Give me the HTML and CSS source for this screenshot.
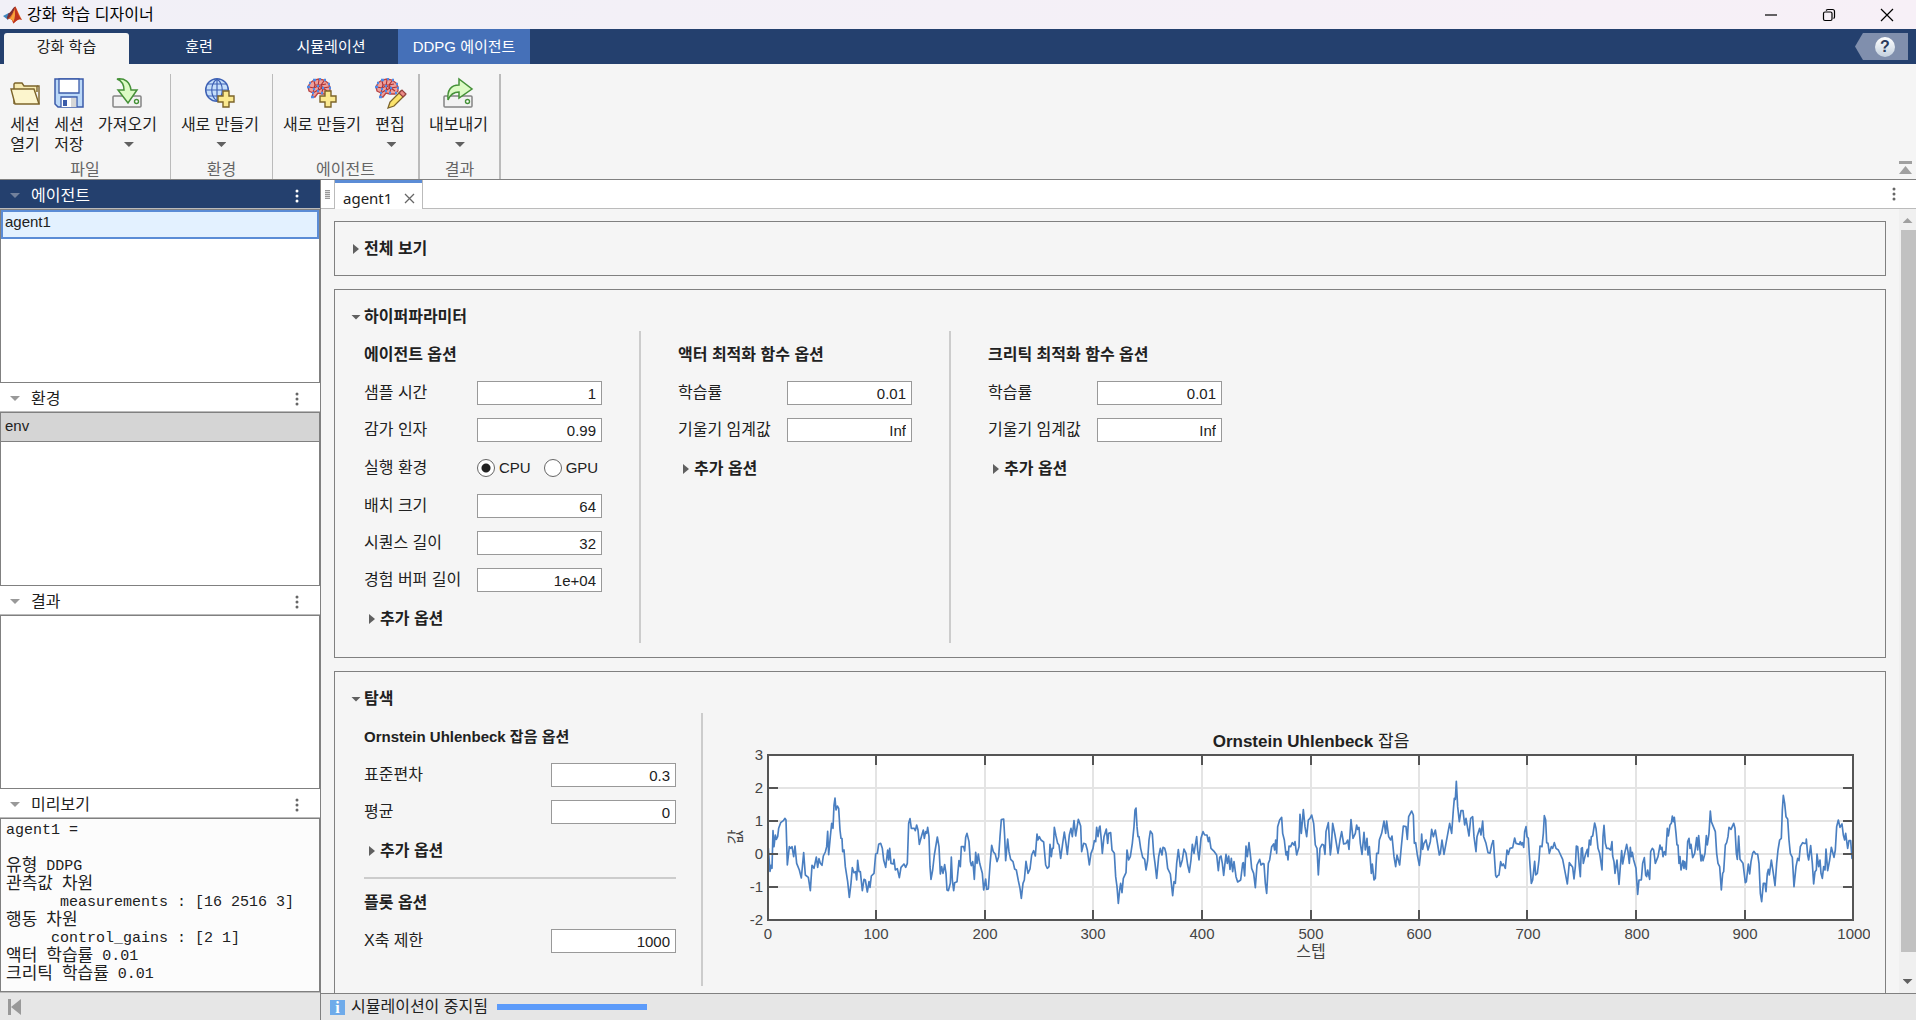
FILE: index.html
```html
<!DOCTYPE html>
<html lang="ko">
  <head>
    <meta charset="utf-8">
    <title>강화 학습 디자이너</title>
    <link rel="stylesheet" href="styles.css">
  </head>

  <body>
    <svg width="0" height="0" class="symbols" aria-hidden="true">
      <symbol id="plus" viewBox="0 0 18 18">
        <path d="M6 1h6v5h5v6h-5v5H6v-5H1V6h5z" fill="#fbe98f" stroke="#7c642a" stroke-width="1.4"/>
      </symbol>
      <symbol id="drive" viewBox="0 0 30 13">
        <rect x="1" y="1" width="28" height="11" rx="1" fill="#f2f2f2" stroke="#848484" stroke-width="1.5"/>
        <circle cx="24.500" cy="6.500" r="2" fill="#fff" stroke="#459138" stroke-width="1.4"/>
      </symbol>
      <symbol id="brain" viewBox="0 0 24 21">
        <path d="M5 19l1-4-4-2-1-4 2-4 4-3 5-1 5 1 4 3 2 4v4l-3 3h-5l-4-1-3 4z" fill="#f0a09a" stroke="#b84546" stroke-width="1.3"/>
        <path d="M2 9l5 1 4-2 5 2 6-1M7 10l-1 5 5-3 5-2-1 4M7 3l1 4-1 3M12 2l-1 6 1 5M17 3l-3 4 2 3 4 3M8 7h6l5-1" fill="none" stroke="#a93036" stroke-width="1.1"/>
        <path d="M4 19h3M0 9h3M2 5h2M6 2h3M12 1h2M17 2h2M21 6h2M22 10h2M20 15h2M14 15h2M10 8h2M6 11h2M15 10h2M10 13h2M5 15h2" stroke="#4f8be8" stroke-width="2.4"/>
      </symbol>
      <symbol id="dots" viewBox="0 0 4 14">
        <circle cx="2" cy="2" r="1.500"/><circle cx="2" cy="7" r="1.500"/><circle cx="2" cy="12" r="1.500"/>
      </symbol>
    </svg>

    <div class="app">
      <header class="titlebar">
        <svg class="logo" viewBox="0 0 20 18">
          <path d="M0 10l6-3 3 2-4 5z" fill="#3f86bd"/>
          <path d="M6 7c3-1 4-6 7-7-1 6-4 11-8 14l-1-2z" fill="#7b3036"/>
          <path d="M5 13c4-2 6-8 8-13 2 3 4 9 7 14-4-2-6 1-9 4-1-4-3-5-6-5z" fill="#e8641f"/>
          <path d="M12 2c1 5 0 10-2 14l1 2c3-3 5-6 9-4-4-4-5-9-7-14z" fill="#bd3420"/>
          <path d="M12 3c-1 5-3 8-5 10 2 0 3 1 4 3 2-4 2-9 1-13z" fill="#f6a33d"/>
        </svg>
        <span class="app-name">강화 학습 디자이너</span>
        <div class="window-buttons">
          <button type="button" aria-label="최소화"><svg viewBox="0 0 14 14"><path d="M1 7h12"/></svg></button>
          <button type="button" aria-label="이전 크기로"><svg viewBox="0 0 14 14"><rect x="1.500" y="4" width="8.500" height="8.500" rx="1.500"/><path d="M4 2.500Q5 1.500 6 1.500h4.500q2 0 2 2V9q0 1-1 1.500"/></svg></button>
          <button type="button" aria-label="닫기"><svg viewBox="0 0 14 14"><path d="M1 1l12 12M13 1L1 13"/></svg></button>
        </div>
      </header>

      <nav class="tabs">
        <button type="button" class="tab tab-active">강화 학습</button>
        <button type="button" class="tab">훈련</button>
        <button type="button" class="tab">시뮬레이션</button>
        <button type="button" class="tab tab-context">DDPG 에이전트</button>
        <button type="button" class="help" aria-label="도움말"><span class="help-mark">?</span></button>
      </nav>

      <div class="toolstrip">
        <section class="group">
          <div class="tools tools-file">
            <button type="button" class="tool">
              <svg viewBox="0 0 30 30"><path d="M4 26V6l1-1h7l2 3h13v6" fill="#f6eab0" stroke="#7c642a" stroke-width="1.4"/><path d="M1 11h23l5 15H5z" fill="#fcf5cd" stroke="#7c642a" stroke-width="1.4"/><path d="M27 8h2v18" fill="none" stroke="#7c642a" stroke-width="1.400"/></svg>
              <span>세션<br>열기</span>
            </button>
            <button type="button" class="tool">
              <svg viewBox="0 0 30 30"><path d="M1 1h28v28H4l-3-3z" fill="#bcd9f8" stroke="#3b5ba9" stroke-width="1.500"/><path d="M5 1h20v14H5zM7 29V19h16v10" fill="#fff" stroke="#3b5ba9" stroke-width="1.300"/><path d="M17 20h5v9h-5z" fill="#d7d7d7"/><path d="M9 22h4v6H9z" fill="#3b5ba9"/></svg>
              <span>세션<br>저장</span>
            </button>
            <button type="button" class="tool">
              <svg viewBox="0 0 30 30"><use href="#drive" y="17" width="30" height="13"/><path d="M5 1c8-1 13 3 14 11h6l-9 13-10-13h6c0-5-2-9-7-11z" fill="#dcfbc5" stroke="#459138" stroke-width="1.500"/></svg>
              <span>가져오기</span>
              <i class="arrow-down"></i>
            </button>
          </div>
          <div class="group-name">파일</div>
        </section>
        <section class="group">
          <div class="tools tools-env">
            <button type="button" class="tool">
              <svg viewBox="0 0 30 30"><circle cx="12" cy="12" r="11.300" fill="#c6dffa" stroke="#3f62b5" stroke-width="1.500"/><path d="M12 1v22M1 12h22M3 6h18M3 18h18M12 1c-7 5-7 17 0 22M12 1c7 5 7 17 0 22" fill="none" stroke="#3f62b5" stroke-width="1.200"/><use href="#plus" x="12" y="12" width="18" height="18"/></svg>
              <span>새로 만들기</span>
              <i class="arrow-down"></i>
            </button>
          </div>
          <div class="group-name">환경</div>
        </section>
        <section class="group group-wide">
          <div class="tools tools-agent">
            <button type="button" class="tool">
              <svg viewBox="0 0 30 30"><use href="#brain" width="24" height="21"/><use href="#plus" x="12" y="12" width="18" height="18"/></svg>
              <span>새로 만들기</span>
            </button>
            <button type="button" class="tool">
              <svg viewBox="0 0 30 30"><use href="#brain" width="24" height="21"/><path d="M13 30l2-6 11-11 4 4-11 11z" fill="#fbe36b" stroke="#7c642a" stroke-width="1.300"/><path d="M24 15l3-3 4 4-3 3z" fill="#ed8b87" stroke="#93423f" stroke-width="1.200"/></svg>
              <span>편집</span>
              <i class="arrow-down"></i>
            </button>
          </div>
          <div class="group-name">에이전트</div>
        </section>
        <section class="group group-wide">
          <div class="tools tools-result">
            <button type="button" class="tool">
              <svg viewBox="0 0 30 30"><use href="#drive" y="17" width="30" height="13"/><path d="M5 22C4 12 8 7 16 7V1l13 10-13 9v-6C10 14 7 17 5 22z" fill="#dcfbc5" stroke="#459138" stroke-width="1.500"/></svg>
              <span>내보내기</span>
              <i class="arrow-down"></i>
            </button>
          </div>
          <div class="group-name">결과</div>
        </section>
        <button type="button" class="collapse" aria-label="도구 스트립 최소화">
          <svg viewBox="0 0 13 14"><path d="M0 0h13v3H0zM6.500 5L13 13H0z"/></svg>
        </button>
      </div>

      <div class="workspace">
        <aside class="sidebar">
          <section class="browser browser-active">
            <h2><i class="arrow-down"></i>에이전트<button type="button" class="menu" aria-label="에이전트 메뉴"><svg><use href="#dots"/></svg></button></h2>
            <div class="list"><button type="button" class="item item-selected">agent1</button></div>
          </section>
          <section class="browser">
            <h2><i class="arrow-down"></i>환경<button type="button" class="menu" aria-label="환경 메뉴"><svg><use href="#dots"/></svg></button></h2>
            <div class="list"><button type="button" class="item item-inactive">env</button></div>
          </section>
          <section class="browser">
            <h2><i class="arrow-down"></i>결과<button type="button" class="menu" aria-label="결과 메뉴"><svg><use href="#dots"/></svg></button></h2>
            <div class="list"></div>
          </section>
          <section class="browser">
            <h2><i class="arrow-down"></i>미리보기<button type="button" class="menu" aria-label="미리보기 메뉴"><svg><use href="#dots"/></svg></button></h2>
            <pre class="list preview">agent1 =

<b>유형</b> DDPG
<b>관측값</b> <b>차원</b>
      measurements : [16 2516 3]
<b>행동</b> <b>차원</b>
     control_gains : [2 1]
<b>액터</b> <b>학습률</b> 0.01
<b>크리틱</b> <b>학습률</b> 0.01</pre>
          </section>
          <footer class="sidebar-footer">
            <button type="button" aria-label="패널 접기"><svg viewBox="0 0 13 16"><path d="M0 0h3v16H0zM13 0v16L3 8z"/></svg></button>
          </footer>
        </aside>

        <main class="document">
          <div class="doc-tabs">
            <span class="grip"></span>
            <div class="doc-tab">agent1<button type="button" aria-label="agent1 닫기"><svg viewBox="0 0 11 11"><path d="M1 1l9 9M10 1l-9 9"/></svg></button></div>
            <button type="button" class="menu" aria-label="문서 메뉴"><svg><use href="#dots"/></svg></button>
          </div>

          <div class="doc-body">
            <div class="panels">
              <section class="panel">
                <button type="button" class="toggle"><i class="arrow-right"></i>전체 보기</button>
              </section>

              <section class="panel">
                <button type="button" class="toggle"><i class="arrow-down"></i>하이퍼파라미터</button>
                <div class="columns">
                  <div class="column">
                    <h3>에이전트 옵션</h3>
                    <div class="form">
                      <label for="sampleTime">샘플 시간</label>
                      <input type="text" id="sampleTime" value="1">
                      <label for="discount">감가 인자</label>
                      <input type="text" id="discount" value="0.99">
                      <span>실행 환경</span>
                      <div class="radios">
                        <label><input type="radio" name="device" checked>CPU</label>
                        <label><input type="radio" name="device">GPU</label>
                      </div>
                      <label for="batchSize">배치 크기</label>
                      <input type="text" id="batchSize" value="64">
                      <label for="sequence">시퀀스 길이</label>
                      <input type="text" id="sequence" value="32">
                      <label for="buffer">경험 버퍼 길이</label>
                      <input type="text" id="buffer" value="1e+04">
                      <button type="button" class="toggle more"><i class="arrow-right"></i>추가 옵션</button>
                    </div>
                  </div>
                  <div class="column">
                    <h3>액터 최적화 함수 옵션</h3>
                    <div class="form form-optimizer">
                      <label for="actorRate">학습률</label>
                      <input type="text" id="actorRate" value="0.01">
                      <label for="actorGradient">기울기 임계값</label>
                      <input type="text" id="actorGradient" value="Inf">
                      <button type="button" class="toggle more"><i class="arrow-right"></i>추가 옵션</button>
                    </div>
                  </div>
                  <div class="column">
                    <h3>크리틱 최적화 함수 옵션</h3>
                    <div class="form form-optimizer">
                      <label for="criticRate">학습률</label>
                      <input type="text" id="criticRate" value="0.01">
                      <label for="criticGradient">기울기 임계값</label>
                      <input type="text" id="criticGradient" value="Inf">
                      <button type="button" class="toggle more"><i class="arrow-right"></i>추가 옵션</button>
                    </div>
                  </div>
                </div>
              </section>

              <section class="panel">
                <button type="button" class="toggle"><i class="arrow-down"></i>탐색</button>
                <div class="columns">
                  <div class="column column-noise">
                    <h3 class="latin">Ornstein Uhlenbeck 잡음 옵션</h3>
                    <div class="form form-noise">
                      <label for="deviation">표준편차</label>
                      <input type="text" id="deviation" value="0.3">
                      <label for="mean">평균</label>
                      <input type="text" id="mean" value="0">
                      <button type="button" class="toggle more"><i class="arrow-right"></i>추가 옵션</button>
                    </div>
                    <hr>
                    <h3>플롯 옵션</h3>
                    <div class="form form-noise">
                      <label for="xLimit">X축 제한</label>
                      <input type="text" id="xLimit" value="1000">
                    </div>
                  </div>
                  <div class="plot">
                    <svg viewBox="0 0 1154 240" role="img" aria-label="Ornstein Uhlenbeck 잡음">
                      <rect x="52" y="29" width="1085" height="165" fill="#fff"/>
                      <path class="grid-line" d="M160 29v165M269 29v165M377 29v165M486 29v165M595 29v165M703 29v165M811 29v165M920 29v165M1029 29v165M52 62h1085M52 95h1085M52 128h1085M52 161h1085"/>
                      <g class="noise">
                        <polyline transform="translate(44 -6) scale(.33333)" points="23,385 25,385 30,454 33,436 36,445 39,332 42,380 46,345 49,358 53,350 56,325 62,308 70,302 75,295 78,300 82,435 88,380 92,385 96,380 101,410 105,378 110,430 118,450 124,474 131,398 136,465 145,472 151,512 156,436 162,445 169,411 173,442 177,416 181,430 186,436 190,408 196,396 200,380 203,334 206,404 211,350 215,310 219,325 222,255 225,234 228,270 232,258 236,265 240,330 243,355 246,356 248,395 252,390 256,440 263,485 268,532 273,490 277,443 282,458 287,455 290,480 293,421 297,455 301,455 307,512 312,478 316,480 322,516 327,485 330,502 334,468 342,460 347,402 352,400 356,373 362,370 367,385 371,420 377,442 383,390 386,420 389,385 393,430 400,432 402,418 406,450 412,446 418,473 423,442 432,432 437,442 442,430 446,310 450,296 454,325 463,325 466,332 470,315 474,330 478,373 484,350 490,330 493,355 497,335 500,340 503,322 507,350 510,440 513,478 518,450 523,405 532,351 537,380 541,462 545,440 549,460 554,434 558,460 561,510 565,512 571,490 574,411 577,480 581,512 584,488 591,485 597,422 601,440 604,380 611,380 614,393 617,352 621,340 627,365 631,425 634,437 638,425 640,440 643,478 647,397 651,430 655,402 659,430 667,460 671,510 677,477 680,508 685,507 690,435 695,376 700,395 706,403 711,425 716,410 720,350 724,299 731,297 734,350 737,422 743,357 747,395 752,418 759,425 764,447 769,450 775,482 780,505 784,535 789,490 793,480 798,424 804,460 810,447 815,405 821,392 826,408 831,342 834,360 838,350 843,360 851,366 857,435 862,445 867,440 870,373 874,410 877,385 880,385 883,322 888,348 893,370 897,375 902,415 908,370 913,336 918,370 922,403 928,345 933,325 937,350 942,302 947,348 955,298 962,318 965,395 971,370 977,372 982,390 988,435 993,400 999,385 1003,362 1007,365 1010,322 1014,350 1018,322 1020,318 1024,360 1027,400 1032,350 1039,327 1043,370 1046,340 1052,338 1056,390 1063,400 1067,470 1071,500 1075,550 1079,510 1082,490 1086,518 1090,475 1098,458 1101,390 1106,420 1111,410 1117,370 1122,320 1125,270 1128,264 1131,320"/>
                        <polyline transform="translate(404 -6) scale(.33333)" points="51,320 54,350 57,350 62,385 68,412 74,418 78,450 83,420 87,360 91,333 97,342 101,400 105,430 110,475 116,410 121,385 126,405 129,382 134,385 138,400 143,445 151,462 158,527 162,485 166,490 170,430 175,389 181,440 187,420 192,387 198,400 203,435 208,457 213,420 217,373 222,400 230,350 233,390 237,420 243,355 249,335 254,345 261,345 265,365 268,352 273,385 283,395 290,405 295,452 299,412 303,408 307,430 311,466 318,403 322,430 326,408 330,448 334,415 338,455 342,425 348,470 353,486 362,480 368,430 370,428 374,468 378,378 382,410 387,368 392,412 395,445 401,460 406,503 411,435 419,418 423,435 429,430 432,432 436,490 440,520 445,430 449,420 455,380 461,372 464,390 467,360 470,400 473,320 479,300 485,292 488,340 493,360 498,405 501,395 504,420 507,378 512,380 517,368 522,375 525,365 530,405 537,380 540,283 544,340 550,269 555,320 560,350 565,300 570,295 575,285 581,310 586,375 591,385 595,465 600,385 606,373 611,375 615,403 618,335 625,308 631,405 634,380 638,310 645,345 654,400 660,360 665,335 671,372 678,370 683,360 687,388 693,299 699,355 706,340 710,315 713,328 717,322 721,370 726,403 732,337 736,390 741,355 744,405 748,380 754,460 757,432 762,480 766,475 770,400 775,400 778,360 785,340 792,303 797,340 800,303 806,350 812,360 816,348 822,410 827,440 831,405 839,435 844,380 850,318 858,320 862,358 866,290 875,273 880,285 883,370 887,368 892,405 898,436 902,400 905,342 908,388 912,370 918,360 924,390 931,365 935,328 940,350 946,330 952,368 958,405 961,400 966,360 972,403 979,365 989,310 995,340 1000,270 1003,235 1006,238 1009,184 1013,260 1018,305 1023,272 1029,272 1034,315 1038,295 1047,348 1052,295 1058,290 1062,350 1068,395 1071,350 1079,325 1083,345 1088,303 1091,350 1098,370 1104,398 1110,400 1115,375 1120,360"/>
                        <polyline transform="translate(764 -6) scale(.33333)" points="40,360 44,420 47,467 50,472 53,467 57,465 62,425 66,437 70,432 76,445 81,390 85,403 90,385 98,383 104,354 108,370 118,373 121,365 124,375 127,368 131,382 134,335 138,320 141,350 145,355 149,420 154,490 158,480 164,424 167,465 172,460 177,420 180,378 186,380 190,340 193,287 197,300 200,368 204,370 208,400 214,380 218,385 223,368 228,385 235,390 248,418 256,460 262,492 268,428 278,442 282,477 286,440 289,378 293,380 298,440 301,470 304,385 307,383 310,430 316,405 322,388 324,410 328,360 332,375 334,350 338,348 344,309 348,325 354,385 359,400 366,450 369,350 372,316 376,370 380,385 386,385 392,390 396,365 398,408 402,425 405,460 411,420 417,493 421,440 425,392 428,432 434,400 440,373 444,395 448,430 451,382 454,410 457,397 461,420 468,445 473,523 477,480 484,480 488,430 493,413 497,465 500,470 503,450 509,478 512,395 517,385 521,390 526,430 534,410 540,375 543,388 546,382 549,410 553,395 557,405 562,325 565,348 570,315 574,310 577,288 580,305 583,292 588,340 591,375 594,375 597,430 600,410 603,450 609,422 612,445 614,425 619,448 623,365 627,355 630,385 633,373 638,413 644,400 650,353 653,390 656,347 659,380 663,423 666,405 669,422 675,400 679,347 682,375 687,340 691,273 694,305 700,320 706,335 710,400 714,430 719,440 724,510 728,460 731,455 736,375 740,368 744,350 747,322 753,328 761,310 765,325 769,400 772,418 776,348 780,418 789,430 796,488 799,485 805,432 809,462 813,425 818,400 822,394 827,402 833,402 837,430 841,520 845,545 850,490 855,490 858,515 862,460 865,448 868,465 874,420 880,460 885,497 890,430 894,390 899,360 904,355 907,270 910,226 914,250 918,290 923,297 927,360 931,400 937,412 942,500 948,440 953,415 957,422 961,380 968,368 972,370 978,370 979,357 983,405 986,420 992,377 997,430 1001,492 1005,455 1009,450 1011,402 1016,440 1020,420 1023,460 1027,475 1031,440 1035,450 1038,387 1043,452 1049,420 1054,382 1062,412 1066,390 1070,320 1075,300 1080,322 1086,312 1090,345 1094,360 1097,340 1103,385 1107,362 1112,362 1116,415 1120,395"/>
                      </g>
                      <rect class="axis" x="52" y="29" width="1085" height="165"/>
                      <path class="axis" d="M160 29v10m0 145v10M269 29v10m0 145v10M377 29v10m0 145v10M486 29v10m0 145v10M595 29v10m0 145v10M703 29v10m0 145v10M811 29v10m0 145v10M920 29v10m0 145v10M1029 29v10m0 145v10M52 62h10m1065 0h10M52 95h10m1065 0h10M52 128h10m1065 0h10M52 161h10m1065 0h10"/>
                      <text x="595" y="21" class="plot-title">Ornstein Uhlenbeck <tspan>잡음</tspan></text>
                      <g class="y-ticks">
                        <text x="47" y="34">3</text>
                        <text x="47" y="67">2</text>
                        <text x="47" y="100">1</text>
                        <text x="47" y="133">0</text>
                        <text x="47" y="166">-1</text>
                        <text x="47" y="199">-2</text>
                      </g>
                      <g class="x-ticks">
                        <text x="52" y="213">0</text>
                        <text x="160" y="213">100</text>
                        <text x="269" y="213">200</text>
                        <text x="377" y="213">300</text>
                        <text x="486" y="213">400</text>
                        <text x="595" y="213">500</text>
                        <text x="703" y="213">600</text>
                        <text x="812" y="213">700</text>
                        <text x="921" y="213">800</text>
                        <text x="1029" y="213">900</text>
                        <text x="1138" y="213">1000</text>
                      </g>
                      <text x="595" y="231" class="axis-label">스텝</text>
                      <text transform="translate(25 111) rotate(-90)" class="axis-label">값</text>
                    </svg>
                  </div>
                </div>
              </section>
            </div>
            <div class="scrollbar">
              <i class="arrow-up"></i>
              <div class="thumb"></div>
              <i class="arrow-down"></i>
            </div>
          </div>

          <footer class="status">
            <span class="info">i</span>
            <span>시뮬레이션이 중지됨</span>
            <span class="progress"></span>
          </footer>
        </main>
      </div>
    </div>
  </body>
</html>
```
FILE: styles.css
```css
* {
  box-sizing: border-box;
}

body {
  margin: 0;
  font-family: "Liberation Sans", "Noto Sans CJK KR", sans-serif;
  font-size: 16px;
  line-height: 24px;
  color: #212121;
  background-color: #f5f5f5;
}

button {
  margin: 0;
  padding: 0;
  border: none;
  background: none;
  font: inherit;
  color: inherit;
}

h2,
h3 {
  margin: 0;
  font-size: 16px;
}

.symbols {
  position: absolute;
}

.app {
  display: flex;
  flex-direction: column;
  height: 100vh;
  overflow: hidden;
}

/* Small triangles */

.arrow-down,
.arrow-up,
.arrow-right {
  width: 10px;
  height: 5px;
  background-color: #606060;
  clip-path: polygon(0 0, 100% 0, 50% 100%);
}

.arrow-up {
  clip-path: polygon(50% 0, 100% 100%, 0 100%);
}

.arrow-right {
  width: 6px;
  height: 10px;
  clip-path: polygon(0 0, 100% 50%, 0 100%);
}

/* Title bar */

.titlebar {
  display: flex;
  align-items: center;
  flex: 0 0 29px;
  padding-left: 3px;
  background: linear-gradient(90deg, #f1f0f7, #f7f0f7);
  color: #000;
}

.logo {
  width: 19px;
  height: 18px;
  margin-right: 5px;
}

.window-buttons {
  display: flex;
  margin-left: auto;
}

.window-buttons button {
  display: flex;
  align-items: center;
  justify-content: center;
  width: 58px;
  height: 29px;
}

.window-buttons svg {
  width: 14px;
  height: 14px;
  fill: none;
  stroke: #000;
  stroke-width: 1.2;
}

/* Ribbon tabs */

.tabs {
  display: flex;
  align-items: flex-end;
  flex: 0 0 35px;
  padding: 0 8px 0 4px;
  background-color: #24406e;
  font-size: 15px;
  color: #fff;
}

.tab {
  min-width: 132px;
  height: 35px;
}

.tab:nth-child(2) {
  margin-left: 4px;
}

.tab-active {
  min-width: 125px;
  height: 31px;
  padding-bottom: 4px;
  border-radius: 3px 3px 0 0;
  background-color: #f5f5f5;
  color: #212121;
}

.tab-context {
  background-color: #4570b8;
}

.tab:nth-child(4) {
  margin-left: 1px;
}

.help {
  display: flex;
  align-items: center;
  justify-content: center;
  align-self: center;
  width: 53px;
  height: 27px;
  margin-left: auto;
  padding-left: 7px;
  background-color: #808fad;
  clip-path: polygon(15% 0, 100% 0, 100% 100%, 15% 100%, 0 50%);
}

.help-mark {
  width: 20px;
  height: 20px;
  border-radius: 50%;
  background: linear-gradient(#fff, #c3d0de);
  font-size: 16px;
  font-weight: bold;
  line-height: 20px;
  color: #2b3b5c;
}

/* Toolstrip */

.toolstrip {
  display: flex;
  flex: 0 0 116px;
  border-bottom: 1px solid #808080;
}

.group {
  display: flex;
  flex-direction: column;
  margin-top: 10px;
  border-right: 1px solid #bbb;
}

.group-wide {
  border-right-width: 2px;
}

.tools {
  display: flex;
  flex: 1;
  padding: 4px 13px 0 10px;
}

.tools-file {
  gap: 14px;
}

.tools-agent {
  gap: 14px;
}

.tools-result {
  padding: 4px 11px 0 9px;
}

.tool {
  display: flex;
  flex-direction: column;
  align-items: center;
  line-height: 20px;
}

.tool svg {
  width: 30px;
  height: 30px;
  margin-bottom: 7px;
  overflow: visible;
}

.tool .arrow-down {
  margin: 7px 0 0 3px;
}

.group-name {
  line-height: 18px;
  text-align: center;
  color: #666;
}

.collapse {
  align-self: flex-end;
  margin: 0 4px 4px auto;
  line-height: 0;
}

.collapse svg {
  width: 13px;
  height: 14px;
  fill: #a0a0a0;
}

/* Browsers on the left */

.workspace {
  display: flex;
  flex: 1;
  min-height: 0;
}

.sidebar {
  display: flex;
  flex-direction: column;
  flex: 0 0 321px;
  border-right: 1px solid #808080;
  background-color: #fff;
}

.browser {
  display: flex;
  flex-direction: column;
  flex: 1;
  min-height: 0;
}

.browser h2 {
  display: flex;
  align-items: center;
  height: 29px;
  padding: 3px 21px 0 10px;
  border-bottom: 1px solid #bbb;
  font-weight: normal;
}

.browser h2 .arrow-down {
  margin-right: 11px;
  background-color: #999;
}

.browser-active h2 {
  background-color: #24406e;
  color: #fff;
}

.browser-active h2 .arrow-down {
  background-color: #72819c;
}

.menu {
  width: 4px;
  height: 14px;
  margin-left: auto;
  line-height: 0;
  color: #666;
}

.menu svg {
  width: 4px;
  height: 14px;
  fill: currentColor;
}

.browser-active .menu {
  color: #fff;
}

.list {
  flex: 1;
  margin: 0;
  border: 1px solid #808080;
}

.item {
  display: block;
  width: 100%;
  height: 29px;
  padding: 0 4px 3px;
  font-size: 15px;
  text-align: left;
}

.item-selected {
  padding: 0 2px 6px;
  border: 2px solid #5b8cd6;
  background-color: #e3f1ff;
  line-height: 19px;
}

.item-inactive {
  border-bottom: 1px solid #808080;
  background-color: #d5d5d5;
}

.preview {
  padding: 3px 5px;
  background-color: #fcfcfc;
  font-family: "Liberation Mono", "Noto Sans CJK KR", monospace;
  font-size: 15px;
  line-height: 18px;
  overflow: hidden;
}

.preview b {
  font-size: 17px;
  font-weight: normal;
  line-height: 16px;
  vertical-align: -1px;
}

.sidebar-footer {
  display: flex;
  align-items: center;
  flex: 0 0 28px;
  padding-left: 8px;
  border-top: 1px solid #bbb;
  background-color: #e6e6e6;
}

.sidebar-footer button {
  line-height: 0;
}

.sidebar-footer svg {
  width: 13px;
  height: 16px;
  fill: #999;
}

/* Agent document */

.document {
  display: flex;
  flex-direction: column;
  flex: 1;
  min-width: 0;
}

.doc-tabs {
  display: flex;
  align-items: center;
  flex: 0 0 29px;
  padding-right: 20px;
  border-bottom: 1px solid #bbb;
  background-color: #fff;
}

.grip {
  width: 5px;
  height: 9px;
  margin: 0 4px;
  background: repeating-linear-gradient(#999 0 1px, #ddd 1px 2px);
}

.doc-tab {
  display: flex;
  align-items: center;
  gap: 12px;
  height: 29px;
  margin-bottom: -1px;
  padding: 7px 7px 0 8px;
  border: solid #bbb;
  border-width: 0 1px;
  box-shadow: inset 0 3px #5b8cd6;
  background-color: #fff;
  font-family: "Noto Sans", "Noto Sans CJK KR", sans-serif;
  font-size: 15px;
}

.doc-tab button {
  line-height: 0;
}

.doc-tab svg {
  width: 11px;
  height: 11px;
  stroke: #666;
  stroke-width: 1.3;
}

.doc-body {
  display: flex;
  flex: 1;
  min-height: 0;
}

.panels {
  display: flex;
  flex-direction: column;
  flex: 1;
  gap: 13px;
  min-width: 0;
  padding: 12px 13px 0;
  overflow: hidden;
}

.panel {
  flex: none;
  padding: 15px 15px 14px;
  border: 1px solid #808080;
}

.toggle {
  display: flex;
  align-items: center;
  gap: 3px;
  padding-left: 1px;
  font-weight: bold;
}

.toggle .arrow-right {
  margin: 0 2px;
}

.columns {
  display: flex;
  margin: 2px 0 0 14px;
}

.column {
  padding: 12px 37px;
  border-right: 2px solid #ccc;
}

.column:first-child {
  padding-left: 0;
}

.column:nth-child(3) {
  border-right: none;
}

.column h3 {
  margin-bottom: 14px;
}

.column .latin {
  font-size: 15px;
}

.form {
  display: grid;
  grid-template-columns: 113px 125px;
  row-gap: 13px;
  align-items: center;
}

.form-optimizer {
  grid-template-columns: 109px 125px;
}

.form-noise {
  grid-template-columns: 187px 125px;
}

.form input[type="text"] {
  width: 100%;
  height: 24px;
  padding: 0 5px;
  border: 1px solid #999;
  border-radius: 0;
  background-color: #fff;
  font-family: inherit;
  font-size: 15px;
  text-align: right;
  color: #212121;
}

.radios {
  display: flex;
  gap: 13px;
  height: 26px;
}

.radios label {
  display: flex;
  align-items: center;
  gap: 4px;
  font-size: 15px;
}

.radios input {
  width: 18px;
  height: 18px;
  margin: 0;
  border: 1px solid #666;
  border-radius: 50%;
  background-color: #fff;
  appearance: none;
}

.radios input:checked {
  background: radial-gradient(circle, #212121 4px, #fff 5px);
}

.more {
  height: 26px;
  padding: 2px 0 0 3px;
}

.column-noise {
  padding-right: 25px;
  padding-bottom: 33px;
}

hr {
  height: 2px;
  margin: 14px 0 12px;
  border: none;
  background-color: #ccc;
}

/* Noise plot */

.plot {
  flex: 1;
  min-width: 0;
  padding: 13px 0 0 13px;
}

.plot svg {
  display: block;
  width: 100%;
  font-size: 15px;
  fill: #444;
}

.grid-line {
  stroke: #e4e4e4;
  stroke-width: 2;
}

.axis {
  fill: none;
  stroke: #555;
  stroke-width: 2;
}

.noise {
  fill: none;
  stroke: #4a7fc1;
  stroke-width: 5;
  stroke-linejoin: round;
}

.plot-title {
  font-size: 17px;
  font-weight: bold;
  text-anchor: middle;
  fill: #212121;
}

.plot-title tspan {
  font-weight: normal;
}

.y-ticks {
  text-anchor: end;
}

.x-ticks,
.axis-label {
  text-anchor: middle;
}

.axis-label {
  font-size: 16px;
}

/* Scroll bar and status bar */

.scrollbar {
  display: flex;
  flex-direction: column;
  align-items: center;
  gap: 7px;
  flex: 0 0 17px;
  padding: 9px 0;
  background-color: #f0f0f0;
}

.scrollbar .arrow-up {
  background-color: #a0a0a0;
}

.thumb {
  flex: 1;
  align-self: stretch;
  margin: 0 0 20px 2px;
  background-color: #c1c1c1;
}

.status {
  display: flex;
  align-items: center;
  flex: 0 0 27px;
  padding-left: 9px;
  border-top: 1px solid #808080;
  background-color: #e6e6e6;
}

.info {
  width: 15px;
  height: 15px;
  margin-right: 6px;
  background-color: #6fabea;
  font-family: "Liberation Serif", serif;
  font-weight: bold;
  line-height: 15px;
  text-align: center;
  color: #fff;
}

.progress {
  width: 150px;
  height: 6px;
  margin-left: 9px;
  background-color: #5c9bfa;
}
```
